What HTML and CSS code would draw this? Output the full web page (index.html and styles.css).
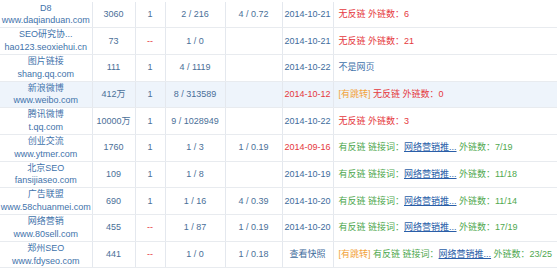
FILE: index.html
```html
<!DOCTYPE html>
<html>
<head>
<meta charset="utf-8">
<link rel="stylesheet" href="styles.css">
</head>
<body>
<table class="links">
  <colgroup>
    <col class="c-site"><col class="c-pr"><col class="c-br"><col class="c-in"><col class="c-out"><col class="c-date"><col class="c-res">
  </colgroup>
  <tr>
    <td class="site"><span class="nm">D8</span><br><span class="nm">www.daqianduan.com</span></td>
    <td class="num">3060</td><td class="num">1</td><td class="num">2 / 216</td><td class="num">4 / 0.72</td>
    <td class="date">2014-10-21</td>
    <td class="res"><span class="red">无反链 外链数：6</span></td>
  </tr>
  <tr>
    <td class="site"><span class="nm">SEO研究协...</span><br><span class="nm">hao123.seoxiehui.cn</span></td>
    <td class="num">73</td><td class="num red">--</td><td class="num">1 / 0</td><td class="num"></td>
    <td class="date">2014-10-21</td>
    <td class="res"><span class="red">无反链 外链数：21</span></td>
  </tr>
  <tr>
    <td class="site"><span class="nm">图片链接</span><br><span class="nm">shang.qq.com</span></td>
    <td class="num">111</td><td class="num">1</td><td class="num">4 / 1119</td><td class="num"></td>
    <td class="date">2014-10-22</td>
    <td class="res"><span class="blue">不是网页</span></td>
  </tr>
  <tr class="hl">
    <td class="site"><span class="nm">新浪微博</span><br><span class="nm">www.weibo.com</span></td>
    <td class="num">412万</td><td class="num">1</td><td class="num">8 / 313589</td><td class="num"></td>
    <td class="date red">2014-10-12</td>
    <td class="res"><span class="orange">[有跳转]</span> <span class="red">无反链 外链数：0</span></td>
  </tr>
  <tr>
    <td class="site"><span class="nm">腾讯微博</span><br><span class="nm">t.qq.com</span></td>
    <td class="num">10000万</td><td class="num">1</td><td class="num">9 / 1028949</td><td class="num"></td>
    <td class="date">2014-10-22</td>
    <td class="res"><span class="red">无反链 外链数：3</span></td>
  </tr>
  <tr>
    <td class="site"><span class="nm">创业交流</span><br><span class="nm">www.ytmer.com</span></td>
    <td class="num">1760</td><td class="num">1</td><td class="num">1 / 3</td><td class="num">1 / 0.19</td>
    <td class="date red">2014-09-16</td>
    <td class="res"><span class="green">有反链 链接词：</span><span class="kw">网络营销推...</span><span class="green"> 外链数：7/19</span></td>
  </tr>
  <tr>
    <td class="site"><span class="nm">北京SEO</span><br><span class="nm">fansijiaseo.com</span></td>
    <td class="num">109</td><td class="num">1</td><td class="num">1 / 8</td><td class="num"></td>
    <td class="date">2014-10-19</td>
    <td class="res"><span class="green">有反链 链接词：</span><span class="kw">网络营销推...</span><span class="green"> 外链数：11/18</span></td>
  </tr>
  <tr>
    <td class="site"><span class="nm">广告联盟</span><br><span class="nm">www.58chuanmei.com</span></td>
    <td class="num">690</td><td class="num">1</td><td class="num">1 / 16</td><td class="num">4 / 0.39</td>
    <td class="date">2014-10-20</td>
    <td class="res"><span class="green">有反链 链接词：</span><span class="kw">网络营销推...</span><span class="green"> 外链数：11/14</span></td>
  </tr>
  <tr>
    <td class="site"><span class="nm">网络营销</span><br><span class="nm">www.80sell.com</span></td>
    <td class="num">455</td><td class="num red">--</td><td class="num">1 / 87</td><td class="num">1 / 0.19</td>
    <td class="date">2014-10-20</td>
    <td class="res"><span class="green">有反链 链接词：</span><span class="kw">网络营销推...</span><span class="green"> 外链数：17/19</span></td>
  </tr>
  <tr>
    <td class="site"><span class="nm">郑州SEO</span><br><span class="nm">www.fdyseo.com</span></td>
    <td class="num">441</td><td class="num red">--</td><td class="num">1 / 0</td><td class="num">1 / 0.18</td>
    <td class="date">查看快照</td>
    <td class="res"><span class="orange">[有跳转]</span> <span class="green">有反链 链接词：</span><span class="kw">网络营销推...</span><span class="green"> 外链数：23/25</span></td>
  </tr>
</table>
</body>
</html>
```
FILE: styles.css
```css
html, body {
  margin: 0;
  padding: 0;
  background: #fff;
}
body {
  font-family: "Liberation Sans", "Noto Sans CJK SC", sans-serif;
  font-size: 9px;
  color: #44709e;
  padding-top: 1.5px;
}
.links {
  width: 557px;
  border-collapse: collapse;
  table-layout: fixed;
}
.c-site { width: 92px; }
.c-pr { width: 43px; }
.c-br { width: 30px; }
.c-in { width: 60px; }
.c-out { width: 57px; }
.c-date { width: 51px; }
.c-res { width: 224px; }
.links td {
  padding: 0;
  height: 25.7px;
  line-height: 12.85px;
  text-align: center;
  border-bottom: 1px solid #e8ebef;
  border-right: 1px solid #e4e8ee;
  white-space: nowrap;
  overflow: hidden;
}
.links td.res {
  border-right: none;
  text-align: left;
  padding-left: 5px;
}
.hl td { background: #eef4fb; }
.nm { color: #3f73ab; }
.num { color: #4a6f98; }
.date { color: #3e6b9c; }
.red { color: #e5383d; }
.links td.red { color: #e5383d; }
.green { color: #4fa84f; }
.blue { color: #3f73ab; }
.orange { color: #f2a33a; }
.kw {
  color: #2a5ea8;
  text-decoration: underline;
}
```
